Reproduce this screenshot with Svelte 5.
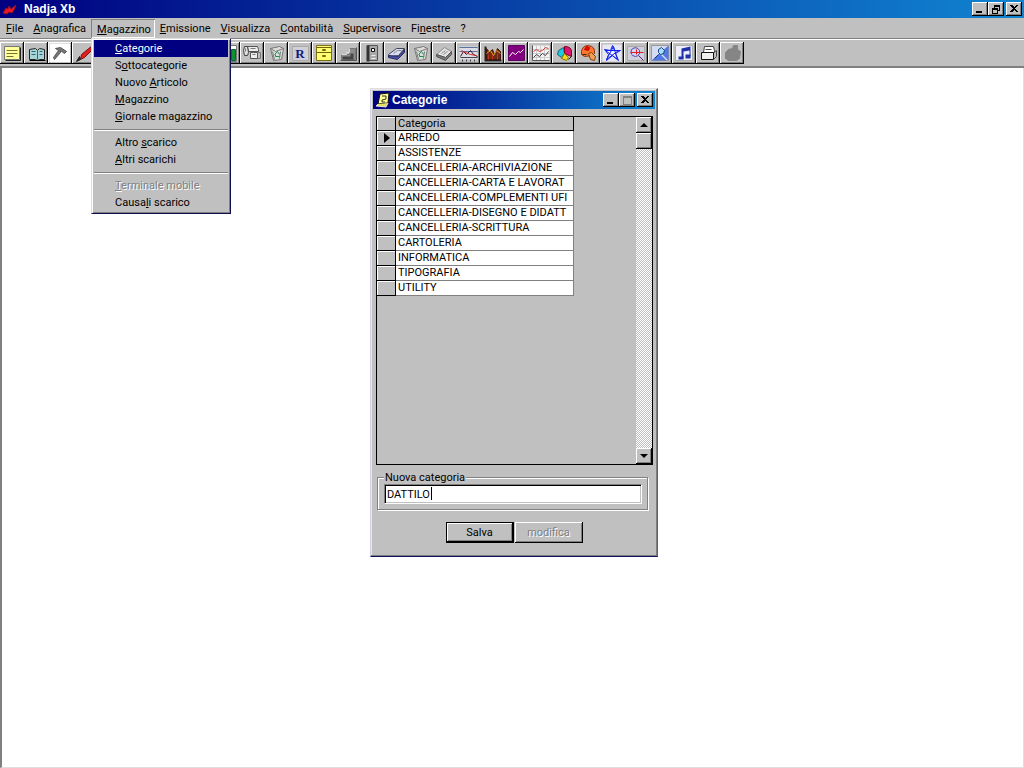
<script>
  const menus = [
    '&File', '&Anagrafica', '&Magazzino', '&Emissione', '&Visualizza',
    '&Contabilità', '&Supervisore', 'Fi&nestre', '?'
  ];

  const entries = [
    { label: '&Categorie' },
    { label: 'S&ottocategorie' },
    { label: 'Nuovo &Articolo' },
    { label: '&Magazzino' },
    { label: '&Giornale magazzino' },
    { separator: true },
    { label: 'Altro &scarico' },
    { label: '&Altri scarichi' },
    { separator: true },
    { label: '&Terminale mobile', disabled: true },
    { label: 'Causa&li scarico' }
  ];

  const categories = [
    'ARREDO',
    'ASSISTENZE',
    'CANCELLERIA-ARCHIVIAZIONE',
    'CANCELLERIA-CARTA E LAVORAT',
    'CANCELLERIA-COMPLEMENTI UFI',
    'CANCELLERIA-DISEGNO E DIDATT',
    'CANCELLERIA-SCRITTURA',
    'CARTOLERIA',
    'INFORMATICA',
    'TIPOGRAFIA',
    'UTILITY'
  ];

  const bin = [
    ['M6 6L15 4L19 6L17 17L9 18Z', '#ddd', '#777'],
    ['M6 6L11 9L19 6M8 9L10 17M16 9L15 16', 'none', '#777'],
    ['M10 12L13 9L15 12M15 14H11V12', 'none', '#189048']
  ];

  // each icon: list of [path, fill, stroke] on the 24x22 face of a button
  const tools = [
    { name: 'Note', art: [['M4 4H19V17H4Z', '#ffff9c', '#777'], ['M6 8H17M6 11H17M6 14H13', 'none', '#77702a'], ['M5 18H20V5', 'none', '#222']] },
    { name: 'Rubrica', art: [['M5 7L11 6L13 8L15 6L20 7V17H15L13 18L11 17H5Z', '#a8d4d8', '#222'], ['M13 8V17M7 9H11M7 12H11M15 9H18M15 12H18', 'none', '#286878'], ['M5 18H21', 'none', '#000']] },
    { name: 'Strumenti', art: [['M1 1H22V20H1Z', '#fff', 'none'], ['M7 6L12 5L18 9L16 11L12 8L12 10L6 17L5 15L10 8Z', '#777', '#555']] },
    { name: 'Penna', art: [['M20 3L22 5L12 15L8 17L9 12Z', '#e02020', '#801010'], ['M8 17L4 19L7 14Z', '#222', '#222']] },
    { name: 'Documento', art: [['M6 4H18V18H6Z', '#fff', '#444']] },
    { name: 'Cartella', art: [['M4 7H10L12 5H20V17H4Z', '#ffe060', '#444']] },
    { name: 'Stampa', art: [['M5 9H19V16H5Z', '#bbb', '#333']] },
    { name: 'Cerca', art: [['M6 5H14V13H6Z', '#ddf', '#333'], ['M14 13L19 18', 'none', '#333']] },
    { name: 'Archivio', art: [['M5 5H19V17H5Z', '#ddd', '#333']] },
    { name: 'Grafico', art: [['M3 3H20V19H3Z', '#fff', '#777'], ['M7 9H10V18H7Z', '#c03030', 'none'], ['M15 7H19V18H15Z', '#109030', '#064']] },
    { name: 'Telefono', art: [['M7 4H17L18 7V9H8Z', '#eee', '#555'], ['M4 4H7L8 10L7 13H4L3 8Z', '#ddd', '#444'], ['M10 10H17V16H10Z', '#eee', '#555'], ['M17 10H20V16H17M5 6V9M10 6H15M12 12H15', 'none', '#777']] },
    { name: 'Cestino', art: bin },
    { name: 'Registro', art: [['M4 4H20V18H4Z', '#d0d0d8', '#aaa']], letter: 'R' },
    { name: 'Schedario', art: [['M4 3H19V18H4Z', '#ffff70', '#807010'], ['M4 10H19M4 5H19', 'none', '#706010'], ['M10 7H13V8H10ZM10 13H13V14H10Z', '#fff', '#806800']] },
    { name: 'Cassa', art: [['M13 6H19V17H5V12H13Z', '#8c8c8c', '#777'], ['M5 12H10V10H13V6', 'none', '#ddd'], ['M4 18H20V5', 'none', '#555'], ['M6 14H14V17H6ZM14 11H17V17H14Z', '#444', 'none']] },
    { name: 'Dispositivo', art: [['M7 3H17V18H7Z', '#aaa', '#555'], ['M6 3H9V19H6Z', '#333', 'none'], ['M11 6H14V9H11Z', '#fff', '#111'], ['M11 13H15M11 16H15', 'none', '#eee']] },
    { name: 'Libro', art: [['M4 12L12 6H20L14 13L5 14Z', '#d8dcf4', '#445'], ['M4 13V15L13 17L20 10V7L14 14Z', '#4850b0', '#282858'], ['M9 11L13 8H17', 'none', '#888']] },
    { name: 'Svuota cestino', art: bin },
    { name: 'Calcolatrice', art: [['M4 12L12 5L19 9L13 15Z', '#e4e4e4', '#888'], ['M4 12V14L13 18L19 12V9L13 15Z', '#777', '#555'], ['M9 11L13 8M11 12L15 9', 'none', '#888']] },
    { name: 'Andamento', art: [['M3 4H21V17H3Z', '#dcdce8', 'none'], ['M3 5H21M3 9H21', 'none', '#5874a0'], ['M4 14L7 9L10 12L14 8L17 12L21 14', 'none', '#401010'], ['M5 8L9 10L14 12L20 13', 'none', '#d02828'], ['M4 15H21M6 17V19M10 17V19M14 17V19M18 17V19', 'none', '#444']] },
    { name: 'Vendite', art: [['M4 4H6V17H21V19H4Z', '#222', 'none'], ['M6 17V6L9 10L12 7L14 12L17 6L20 9V17Z', '#702818', '#401408'], ['M6 11L10 8L13 13L16 8L20 11', 'none', '#f0a020'], ['M8 12V17M12 13V17M17 11V17', 'none', '#b83818']] },
    { name: 'Statistiche', art: [['M4 3H20V18H4Z', '#800080', '#600060'], ['M5 14L8 10L11 12L14 9L16 10L19 7', 'none', '#fff']] },
    { name: 'Confronto', art: [['M4 3H21V18H4Z', '#f4f4f4', 'none'], ['M4 7H21M4 11H21M4 15H21M8 3V18M12 3V18M16 3V18', 'none', '#ccc'], ['M4 3V18H21', 'none', '#555'], ['M5 9L8 7L11 9L14 8L17 5L20 6', 'none', '#e03030'], ['M5 15L8 12L11 14L14 11L17 13L20 9', 'none', '#444']] },
    { name: 'Torta', art: [['M11 5L6 8L5 12L9 15L12 11Z', '#20c8e0', '#167'], ['M12 4Q19 4 19 9V14L12 11Z', '#d81870', '#802'], ['M12 11L16 15L14 18L9 16Z', '#f0d820', '#870'], ['M19 9V14L16 17', 'none', '#222']] },
    { name: 'Assistente', art: [['M5 9Q6 3 12 3Q19 4 18 11L16 13L8 14L5 12Z', '#ff7828', '#903010'], ['M10 4L13 5L12 8L8 7Z', '#e01010', '#b00'], ['M12 11L15 10L19 14L18 18L14 17Z', '#f0a050', '#804010'], ['M6 12H10', 'none', '#222']] },
    { name: 'Preferiti', art: [['M2 2H21V19H2Z', '#e8e8f4', 'none'], ['M12 3L14 8L20 8L15 11L18 18L12 13L6 18L8 12L4 7L10 8Z', '#f4f4ff', '#1020e0'], ['M5 8L18 8L6 17L13 4L17 17Z', 'none', '#1020f0']] },
    { name: 'Lente', art: [['M3 4H20V18H3Z', '#d0d0dc', '#aaa'], ['M7 7Q12 3 15 8Q16 13 11 14Q5 13 7 7Z', '#d0d4ff', '#5048a0'], ['M14 13L19 18', 'none', '#602080'], ['M6 10H19M12 7V12', 'none', '#e02020']] },
    { name: 'Esplora', art: [['M3 3H20V18H3Z', '#d4dcf4', '#999'], ['M20 3V18L12 10ZM3 18L11 11L18 18Z', '#5078e0', 'none'], ['M10 7L13 5L16 8L15 11L12 12L10 10Z', '#a0e0f8', '#204080'], ['M10 12L6 16', 'none', '#203080']] },
    { name: 'Musica', art: [['M3 3H20V18H3Z', '#eeeefa', '#aaa'], ['M9 6L18 4V14H17V8L11 9V16H9Z', '#2030a8', 'none'], ['M6 14H11V17H6ZM13 12H18V16H13Z', '#2030a8', 'none']] },
    { name: 'Scanner', art: [['M8 4H17L18 8V10H7Z', '#fff', '#444'], ['M5 10H17V17H5Z', '#eee', '#111'], ['M17 10L20 8V14L17 17M9 7H15', 'none', '#444']] },
    { name: 'Non disponibile', art: [['M8 7L12 6L13 3L17 3V7L20 9L19 16L16 18H8L5 16V10Z', '#858585', '#858585']], disabled: true }
  ];

  let value = $state('DATTILO');
  let selected = $state(0);
  let open = $state(true);

  function parts(label) {
    const at = label.indexOf('&');
    return at < 0
      ? [label, '', '']
      : [label.slice(0, at), label[at + 1], label.slice(at + 2)];
  }
</script>

{#snippet mnemonic(label)}
  {@const [before, key, after] = parts(label)}
  <span>{before}<u>{key}</u>{after}</span>
{/snippet}

{#snippet control(kind)}
  <svg width="12" height="10" viewBox="0 0 12 10" fill="none" stroke="#000" shape-rendering="crispEdges">
    {#if kind === 'Riduci a icona'}
      <path d="M2 7H8V9H2Z" fill="#000" stroke="none" />
    {:else if kind === 'Ripristina'}
      <path d="M4 1H10V3H4ZM2 4H8V6H2Z" fill="#000" stroke="none" />
      <path d="M4.5 3V4M9.5 3V6.5H8M2.5 5V9.5H7.5V6" />
    {:else if kind === 'Ingrandisci'}
      <path d="M2.5 1.5H10.5V9.5H2.5ZM2 2.5H10" stroke="#808080" />
    {:else}
      <path d="M2 1H4L6 3L8 1H10L7 4.5L10 8H8L6 6L4 8H2L5 4.5Z" fill="#000" stroke="none" />
    {/if}
  </svg>
{/snippet}

{#snippet controls(middle)}
  <div class="controls">
    {#each ['Riduci a icona', middle, 'Chiudi'] as kind}
      <button class="raised control" aria-label={kind} disabled={kind === 'Ingrandisci'}>{@render control(kind)}</button>
    {/each}
  </div>
{/snippet}

<div class="app">
  <header class="titlebar">
    <svg class="logo" width="16" height="16" viewBox="0 0 16 16">
      <path d="M1 12L4 7L6 8L7 5L9 8L14 4L12 9L10 12L7 11L5 13Z" fill="#e81828" stroke="#901020" />
    </svg>
    <h1>Nadja Xb</h1>
    {@render controls('Ripristina')}
  </header>

  <nav class="menubar">
    {#each menus as menu}
      {@const active = open && menu === '&Magazzino'}
      <div class="menu">
        <button class="menu-title" class:active onclick={() => (open = menu === '&Magazzino' && !open)}>
          {@render mnemonic(menu)}
        </button>
        {#if active}
          <div class="dropdown" role="menu">
            {#each entries as entry, i}
              {#if entry.separator}
                <hr />
              {:else}
                <button class="entry" class:current={i === 0} role="menuitem" disabled={entry.disabled}>
                  {@render mnemonic(entry.label)}
                </button>
              {/if}
            {/each}
          </div>
        {/if}
      </div>
    {/each}
  </nav>

  <div class="toolbar" role="toolbar">
    {#each tools as tool}
      <button class="tool" aria-label={tool.name} disabled={tool.disabled}>
        <svg width="24" height="22" viewBox="0 0 24 22">
          {#each tool.art as [d, fill, stroke]}
            <path {d} {fill} {stroke} transform="translate(.5 .5)" />
          {/each}
          {#if tool.letter}
            <text x="12" y="16" text-anchor="middle">{tool.letter}</text>
          {/if}
        </svg>
      </button>
    {/each}
  </div>

  <main class="workspace">
    <section class="dialog" aria-labelledby="dialog-title">
      <div class="titlebar">
        <svg class="logo" width="16" height="16" viewBox="0 0 16 16">
          <path d="M5 2L14 1L13 11L3 12Z" fill="#ffff90" stroke="#111" />
          <path d="M3 12L1 14L11 15L13 11" fill="#e8e060" stroke="#ddd" />
          <path d="M7 4H11V7L7 8V10H10" fill="none" stroke="#333" />
        </svg>
        <h2 id="dialog-title">Categorie</h2>
        {@render controls('Ingrandisci')}
      </div>

      <div class="grid">
        <div class="records">
          <table>
            <thead>
              <tr><th class="selector"></th><th>Categoria</th></tr>
            </thead>
            <tbody>
              {#each categories as category, i}
                <tr onclick={() => (selected = i)}>
                  <td class="selector">
                    {#if i === selected}
                      <svg width="6" height="10" viewBox="0 0 6 10"><path d="M0 0L6 5L0 10Z" /></svg>
                    {/if}
                  </td>
                  <td>{category}</td>
                </tr>
              {/each}
            </tbody>
          </table>
        </div>
        <div class="scrollbar">
          <button class="raised arrow" aria-label="Su">
            <svg width="8" height="4" viewBox="0 0 8 4"><path d="M0 4L4 0L8 4Z" /></svg>
          </button>
          <div class="raised thumb"></div>
          <button class="raised arrow down" aria-label="Giù">
            <svg width="8" height="4" viewBox="0 0 8 4"><path d="M0 0H8L4 4Z" /></svg>
          </button>
        </div>
      </div>

      <div class="group">
        <label for="new-category">Nuova categoria</label>
        <div class="field">
          <input id="new-category" type="text" bind:value />
          <span class="caret"></span>
        </div>
      </div>

      <div class="actions">
        <button class="raised action default">Salva</button>
        <button class="raised action" disabled>modifica</button>
      </div>
    </section>
  </main>
</div>

<style>
  :global(body) {
    margin: 0;
    background: #fff;
  }

  .app {
    display: flex;
    flex-direction: column;
    min-height: 100vh;
    font: 11px/13px Roboto, 'Liberation Sans', sans-serif;
    color: #000;
    cursor: default;
  }

  .app * {
    box-sizing: border-box;
  }

  button,
  input {
    margin: 0;
    padding: 0;
    border: 0;
    border-radius: 0;
    font: inherit;
    color: inherit;
    background: #c0c0c0;
  }

  button:disabled {
    color: #808080;
    text-shadow: 1px 1px #fff;
  }

  svg {
    display: block;
    flex: none;
  }

  .raised {
    background: #c0c0c0;
    box-shadow: inset -1px -1px #000, inset 1px 1px #fff, inset -2px -2px #808080;
  }

  .titlebar {
    display: flex;
    align-items: center;
    height: 18px;
    padding: 0 2px;
    background: linear-gradient(to right, #000080, #1084d0);
    color: #fff;
  }

  .titlebar h1,
  .titlebar h2 {
    flex: 1;
    margin: 0 0 0 6px;
    font: bold 12px/18px 'Liberation Sans', Arial, sans-serif;
  }

  .titlebar h2 {
    margin-left: 1px;
  }

  .controls {
    display: flex;
  }

  .control {
    display: flex;
    justify-content: center;
    width: 16px;
    height: 14px;
    padding-top: 2px;
  }

  .control:last-child {
    margin-left: 2px;
  }

  .menubar {
    display: flex;
    height: 21px;
    padding: 1px 1px 0;
    background: #c0c0c0;
    border-bottom: 1px solid #808080;
  }

  .menu {
    position: relative;
  }

  .menu-title {
    height: 19px;
    padding: 0 5px;
    white-space: nowrap;
  }

  .menu-title.active {
    padding: 2px 4px 0 6px;
    box-shadow: inset 1px 1px #808080, inset -1px -1px #fff;
  }

  .dropdown {
    position: absolute;
    z-index: 2;
    top: 19px;
    left: 0;
    width: 140px;
    padding: 1px 2px 2px;
    background: #c0c0c0;
    border: 1px solid;
    border-color: #dfdfdf #101050 #101050 #dfdfdf;
    box-shadow: inset 1px 1px #fff, inset -1px -1px #808080;
  }

  .entry {
    display: block;
    width: 100%;
    height: 17px;
    padding-left: 21px;
    text-align: left;
    white-space: nowrap;
  }

  .entry.current {
    background: #000080;
    color: #fff;
  }

  hr {
    height: 2px;
    margin: 4px 0 3px;
    border: 0;
    border-top: 1px solid #808080;
    border-bottom: 1px solid #fff;
  }

  .toolbar {
    display: flex;
    padding: 2px 0;
    background: #c0c0c0;
    border-top: 1px solid #fff;
    border-bottom: 2px solid #808080;
  }

  .tool {
    flex: none;
    width: 24px;
    height: 22px;
    box-shadow: inset -1px -1px #000, inset 1px 1px #fff, inset -2px -2px #808080;
  }

  .tool text {
    font: bold 13px 'Liberation Serif', serif;
    fill: #101880;
  }

  .workspace {
    position: relative;
    flex: 1;
    background: #fff;
    border-left: 2px solid #808080;
    border-right: 1px solid #dfdfdf;
    border-bottom: 1px solid #dfdfdf;
  }

  .dialog {
    position: absolute;
    top: 20px;
    left: 368px;
    width: 288px;
    padding-bottom: 13px;
    background: #c0c0c0;
    border: 1px solid;
    border-color: #dfdfdf #606068 #101060 #d0d0e8;
    box-shadow: inset -1px -1px #808080, inset 1px 1px #e8e8e8;
  }

  .dialog .titlebar {
    margin: 2px 2px 0;
  }

  .grid {
    display: flex;
    height: 349px;
    margin: 7px 4px 0 5px;
    border: 1px solid #000;
  }

  .records {
    flex: 1;
  }

  table {
    width: 197px;
    table-layout: fixed;
    border-collapse: separate;
    border-spacing: 0;
  }

  th,
  td {
    height: 15px;
    padding: 0 0 0 2px;
    overflow: hidden;
    border-right: 1px solid #808080;
    border-bottom: 1px solid #808080;
    background: #fff;
    font-weight: normal;
    line-height: 14px;
    text-align: left;
    white-space: nowrap;
  }

  th {
    height: 14px;
    line-height: 13px;
    background: #c0c0c0;
    border-color: #000;
  }

  .selector {
    width: 19px;
    padding-left: 7px;
    background: #c0c0c0;
    border-color: #000;
    box-shadow: inset 1px 1px #fff;
  }

  .scrollbar {
    display: flex;
    flex-direction: column;
    width: 16px;
    background: repeating-conic-gradient(#fff 0 25%, #c0c0c0 0 50%) 0 0 / 2px 2px;
  }

  .arrow {
    display: flex;
    align-items: center;
    justify-content: center;
    height: 16px;
  }

  .thumb {
    height: 16px;
  }

  .down {
    margin-top: auto;
  }

  .group {
    margin: 12px 9px 0 6px;
    padding: 6px 5px 5px 6px;
    border: 1px solid #808080;
    box-shadow: 1px 1px #fff, inset 1px 1px #fff;
  }

  .group label {
    display: block;
    width: max-content;
    margin-top: -13px;
    padding: 0 1px;
    background: #c0c0c0;
  }

  .field {
    position: relative;
  }

  .field input {
    display: block;
    width: 100%;
    height: 20px;
    padding: 0 2px;
    background: #fff;
    border: 1px solid;
    border-color: #808080 #fff #fff #808080;
    box-shadow: inset 1px 1px #000, inset -1px -1px #c0c0c0;
    outline: 0;
  }

  .caret {
    position: absolute;
    top: 3px;
    left: 47px;
    width: 1px;
    height: 13px;
    background: #000;
  }

  .actions {
    display: flex;
    justify-content: center;
    gap: 1px;
    margin-top: 12px;
  }

  .action {
    width: 68px;
    height: 21px;
  }

  .default {
    border: 1px solid #000;
  }
</style>
